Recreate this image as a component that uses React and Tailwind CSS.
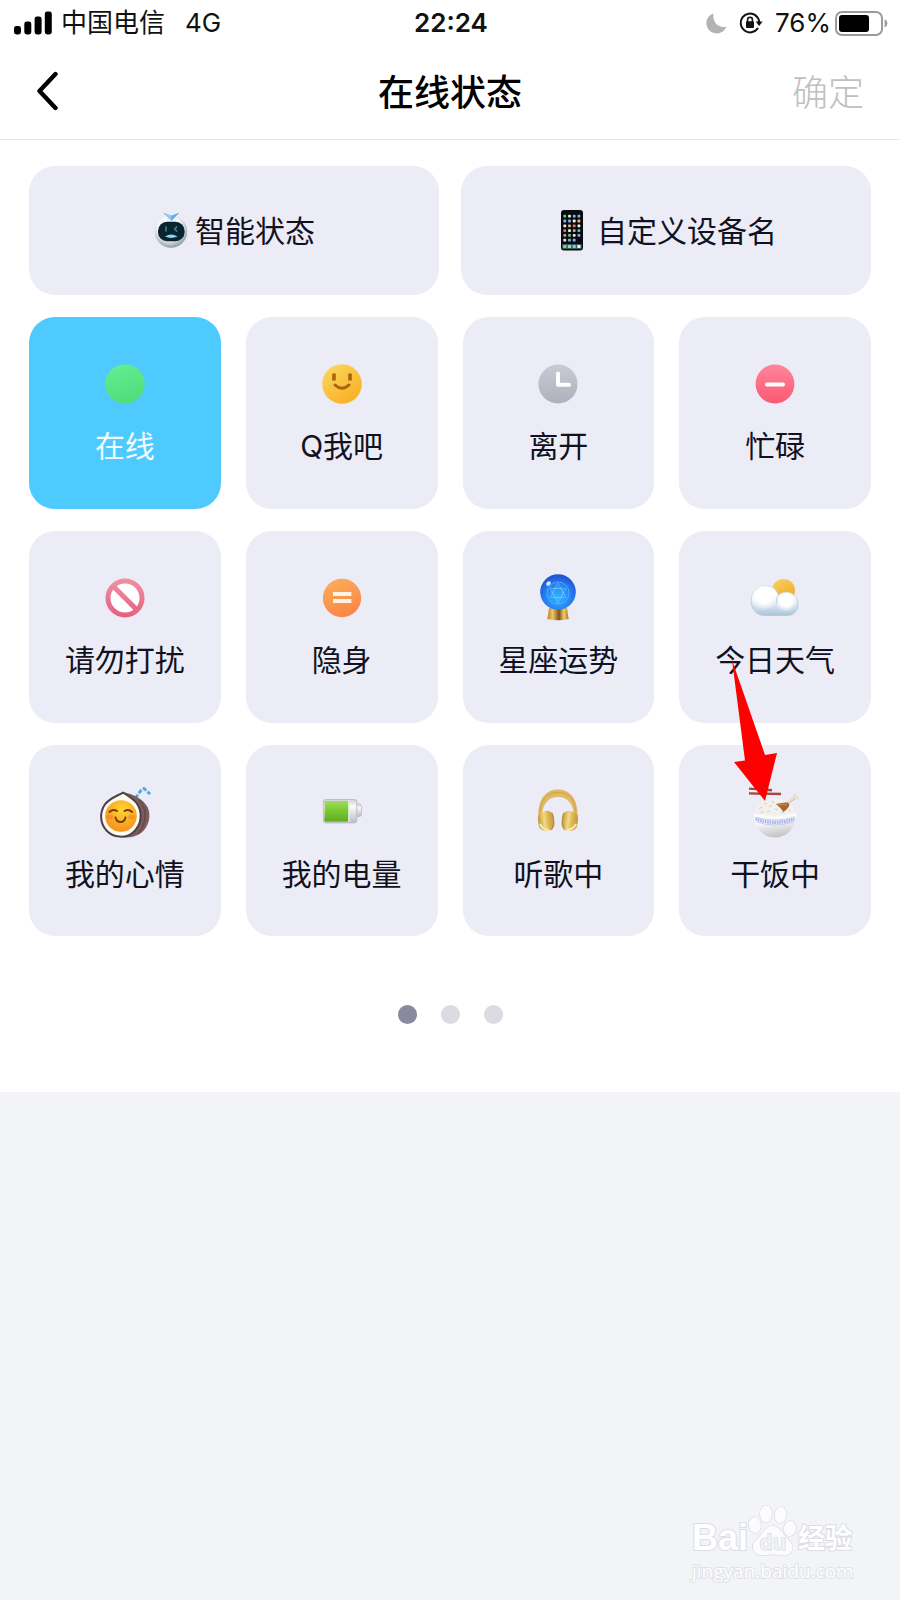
import { useState } from 'react';

const SignalIcon = () => (
  <svg width="38" height="24" viewBox="0 0 38 24" aria-hidden="true">
    <rect x="0" y="15" width="7" height="8.5" rx="2.4" />
    <rect x="10.3" y="10.5" width="7" height="13" rx="2.4" />
    <rect x="20.6" y="5.5" width="7" height="18" rx="2.4" />
    <rect x="30.8" y="0.5" width="7" height="23" rx="2.4" />
  </svg>
);

const MoonIcon = () => (
  <svg width="21" height="21" viewBox="0 0 21 21" aria-hidden="true">
    <path d="M7.6 0.6 C5.8 7.8 11.4 15.6 20.4 13.8 C18.6 18 15 20.4 10.8 20.4 C5 20.4 0.4 16 0.4 10.3 C0.4 5.8 3.2 2 7.6 0.6Z" fill="#b3b3b3" />
  </svg>
);

const LockIcon = () => (
  <svg width="24" height="22" viewBox="0 0 24 22" fill="none" aria-hidden="true">
    <path d="M16.6 3.4 A9.4 9.4 0 1 0 18.6 16.6" stroke="#111" strokeWidth="2" strokeLinecap="round" />
    <path d="M16.4 3.2 A9.4 9.4 0 0 1 20.2 10" stroke="#111" strokeWidth="2" />
    <path d="M16.6 9.4 H23.6 L20.2 14Z" fill="#111" />
    <rect x="7" y="9.3" width="8" height="6.7" rx="1" fill="#111" />
    <path d="M8.6 10 V7.6 A2.4 2.4 0 0 1 13.4 7.6 V10" stroke="#111" strokeWidth="1.6" />
  </svg>
);

const PhoneBatteryIcon = () => (
  <svg width="53" height="25" viewBox="0 0 53 25" aria-hidden="true">
    <rect x="1" y="1" width="46" height="23" rx="6" fill="none" stroke="#9b9b9b" strokeWidth="2" />
    <rect x="4" y="4" width="30" height="17" rx="3" fill="#000" />
    <path d="M49.6 8.6 Q52.4 9.6 52.4 12.5 Q52.4 15.4 49.6 16.4Z" fill="#9b9b9b" />
  </svg>
);

const RobotIcon = () => (
  <svg width="36" height="44" viewBox="0 0 36 44" aria-hidden="true">
    <defs>
      <radialGradient id="robotHead" cx="0.45" cy="0.38" r="0.62">
        <stop offset="0.6" stopColor="#f4f6f7" />
        <stop offset="1" stopColor="#8f9ca3" />
      </radialGradient>
    </defs>
    <circle cx="18" cy="22.6" r="16.2" fill="url(#robotHead)" />
    <path d="M10 3.5 L18 6.8 L26.5 3.5 L18.6 12Z" fill="#5ab0f6" />
    <path d="M10 3.5 L18 6.8 L18.6 12Z" fill="#86c9fb" />
    <rect x="5" y="12.8" width="26.6" height="19.4" rx="9" fill="#0a2530" />
    <path d="M13 17.5 V22.5 M24 17.5 L21.8 20 L24 22.5" stroke="#3f8f91" strokeWidth="1.5" fill="none" />
    <path d="M12 27.5 Q18 23.6 24.5 27.5 Q18 30.4 12 27.5Z" fill="#7fd8fb" />
  </svg>
);

const appColors = ['#5fc795', '#f4f4f4', '#e9b08c', '#8fa9e8', '#e5e5e5', '#d9a08c', '#d97c6c', '#f2efe2', '#7fb3d9'];

const MobileIcon = () => (
  <svg width="36" height="44" viewBox="0 0 36 44" aria-hidden="true">
    <rect x="6" y="1" width="22" height="40.5" rx="3" fill="#090b10" />
    {Array.from({ length: 23 }, (_, i) => (
      <rect
        key={i}
        x={8.4 + (i % 4) * 4.7}
        y={5.8 + Math.floor(i / 4) * 4.8}
        width="2.8"
        height="2.8"
        rx="0.7"
        fill={appColors[(i * 4 + Math.floor(i / 4)) % 9]}
      />
    ))}
    <rect x="7.2" y="35" width="19.6" height="5" rx="1" fill="#3b5a57" />
    {['#76d59a', '#8be0b0', '#78cfd0', '#f1f4f1'].map((color, i) => (
      <rect key={color} x={8.2 + i * 4.7} y="35.9" width="3.2" height="3.2" rx="0.7" fill={color} />
    ))}
  </svg>
);

const OnlineIcon = () => (
  <>
    <defs>
      <linearGradient id="online" x1="0" y1="0" x2="0.3" y2="1">
        <stop stopColor="#66ee90" />
        <stop offset="1" stopColor="#52dd7d" />
      </linearGradient>
    </defs>
    <circle cx="28" cy="28" r="19.8" fill="url(#online)" />
  </>
);

const SmileIcon = () => (
  <>
    <defs>
      <linearGradient id="smile" x1="0.1" y1="0" x2="0.8" y2="1">
        <stop stopColor="#fbd85a" />
        <stop offset="1" stopColor="#f7ae25" />
      </linearGradient>
    </defs>
    <circle cx="28" cy="28" r="19.8" fill="url(#smile)" />
    <path d="M20 17.5 V24.5 M36 17.5 V24.5" stroke="#a9620f" strokeWidth="3.6" />
    <path d="M21 29 Q28 35.5 35 29" stroke="#a9620f" strokeWidth="3" strokeLinecap="round" fill="none" />
  </>
);

const AwayIcon = () => (
  <>
    <defs>
      <linearGradient id="away" x1="0" y1="0" x2="0" y2="1">
        <stop stopColor="#c9cad3" />
        <stop offset="1" stopColor="#b0b0bd" />
      </linearGradient>
    </defs>
    <circle cx="28" cy="28" r="19.6" fill="url(#away)" />
    <path d="M28 17.5 V28.8 H39" stroke="#fff" strokeWidth="4" strokeLinecap="round" strokeLinejoin="round" fill="none" />
  </>
);

const BusyIcon = () => (
  <>
    <defs>
      <linearGradient id="busy" x1="0" y1="0" x2="0" y2="1">
        <stop stopColor="#ff859b" />
        <stop offset="1" stopColor="#fc5872" />
      </linearGradient>
    </defs>
    <circle cx="28" cy="28" r="19.4" fill="url(#busy)" />
    <path d="M20 28.5 H36" stroke="#fff" strokeWidth="4" strokeLinecap="round" />
  </>
);

const BlockIcon = () => (
  <>
    <defs>
      <linearGradient id="block" gradientUnits="userSpaceOnUse" x1="28" y1="8" x2="28" y2="48">
        <stop stopColor="#ee93a5" />
        <stop offset="1" stopColor="#e2607f" />
      </linearGradient>
    </defs>
    <circle cx="28" cy="28" r="17" fill="#fff" stroke="url(#block)" strokeWidth="5" />
    <path d="M16 16 L40 40" stroke="url(#block)" strokeWidth="5" />
  </>
);

const HiddenIcon = () => (
  <>
    <defs>
      <linearGradient id="hidden" x1="0" y1="0" x2="0.4" y2="1">
        <stop stopColor="#fbb05c" />
        <stop offset="1" stopColor="#fa8846" />
      </linearGradient>
    </defs>
    <circle cx="28" cy="28" r="19.2" fill="url(#hidden)" />
    <path d="M19 24 H37.4 M19 31 H37.4" stroke="#fff3e6" strokeWidth="4" />
  </>
);

const CrystalIcon = () => (
  <>
    <defs>
      <radialGradient id="crystal" cx="0.5" cy="0.65" r="0.6">
        <stop stopColor="#33b5fd" />
        <stop offset="0.6" stopColor="#2583f5" />
        <stop offset="1" stopColor="#2355d3" />
      </radialGradient>
      <linearGradient id="stand">
        <stop stopColor="#b5812b" />
        <stop offset="0.25" stopColor="#efc66a" />
        <stop offset="0.55" stopColor="#7d5218" />
        <stop offset="0.78" stopColor="#f4cb70" />
        <stop offset="1" stopColor="#a9772a" />
      </linearGradient>
    </defs>
    <path d="M19 38 H37 L38.6 49 Q28 51.5 17.4 49Z" fill="url(#stand)" />
    <circle cx="28" cy="22" r="17.8" fill="url(#crystal)" />
    <circle cx="28" cy="23" r="11" fill="none" stroke="#63c6ff" strokeWidth="0.8" opacity="0.7" />
    <path d="M28 13 L36 27.5 H20Z M28 33 L20 18.5 H36Z" fill="none" stroke="#7fd3ff" strokeWidth="0.8" opacity="0.6" />
    <circle cx="28" cy="23" r="5" fill="none" stroke="#7fd3ff" strokeWidth="0.8" opacity="0.7" />
    <ellipse cx="18.5" cy="13.5" rx="2.6" ry="1.8" transform="rotate(-40 18.5 13.5)" fill="#d4ebff" />
  </>
);

const WeatherIcon = () => (
  <>
    <defs>
      <linearGradient id="sun" x1="0" y1="0" x2="0.6" y2="1">
        <stop stopColor="#f8d45f" />
        <stop offset="1" stopColor="#f1a92c" />
      </linearGradient>
      <linearGradient id="cloud" gradientUnits="userSpaceOnUse" x1="28" y1="14" x2="28" y2="46">
        <stop offset="0.4" stopColor="#fafbfe" />
        <stop offset="1" stopColor="#a9c3da" />
      </linearGradient>
      <radialGradient id="lobe" cx="0.45" cy="0.4" r="0.6">
        <stop offset="0.4" stopColor="#fff" />
        <stop offset="0.85" stopColor="#fff" stopOpacity="0" />
      </radialGradient>
    </defs>
    <circle cx="36.5" cy="20.5" r="11.5" fill="url(#sun)" />
    <path
      d="M18 45.5 C9 45.5 4.2 38.5 4.2 31 C4.2 22.5 10.5 15.8 18.5 15.8 C25 15.8 29.5 19.5 31.5 25 C34 22.8 37 22 40 22.3 C46.5 23 51 28 51 34.5 C51 41 46.5 45.5 40 45.5Z"
      fill="url(#cloud)"
      stroke="#b4c5d8"
      strokeWidth="0.8"
    />
    <circle cx="18.5" cy="29" r="14" fill="url(#lobe)" />
    <circle cx="40" cy="33" r="11" fill="url(#lobe)" />
    <path d="M31.5 25 C29.5 28 29 31 30 34" stroke="#c9d6e6" strokeWidth="1.2" fill="none" />
  </>
);

const MoodIcon = () => (
  <>
    <defs>
      <radialGradient id="mood" cx="0.55" cy="0.3" r="0.75">
        <stop stopColor="#ffd735" />
        <stop offset="1" stopColor="#f58a1c" />
      </radialGradient>
    </defs>
    <path d="M38.5 14 L44.5 5.5 L47 4.5 L53 10" stroke="#cdeaff" strokeWidth="2.8" fill="none" strokeLinejoin="round" />
    <path d="M38.5 14 L44.5 5.5 L47 4.5 L53 10" stroke="#55a3da" strokeWidth="2.8" fill="none" strokeDasharray="4 2" strokeLinejoin="round" />
    <path d="M26 8 C36 10 46 15 50.5 23 C54.5 31 52 43 44 49 C38 53.5 30 54 24 53Z" fill="#7b5b5b" />
    <path d="M42 16 C50 24 51 37 41 50" stroke="#694a4b" strokeWidth="1.6" fill="none" />
    <path
      d="M26 8.6 C19 12.5 12 14.5 7.5 21 C2.5 29 3 39.5 9.5 46.5 C16 53.5 28.5 55 36 48.5 C45 40.5 46 28 39.5 19 C36 14.5 30.5 11.5 26 8.6Z"
      fill="#fffaf2"
      stroke="#4a4247"
      strokeWidth="2"
    />
    <circle cx="24" cy="32" r="15.8" fill="url(#mood)" />
    <ellipse cx="13" cy="33" rx="3.5" ry="2.3" fill="#f36b2b" opacity="0.4" />
    <ellipse cx="34.5" cy="33" rx="3.5" ry="2.3" fill="#f36b2b" opacity="0.4" />
    <path d="M12.5 28 Q16 24.5 20 27 M27.5 27 Q31.5 24.5 35 28 M18.5 33.5 Q19.5 38 23.5 38 Q27.5 38 28.5 33.5" stroke="#7c3d07" strokeWidth="2" strokeLinecap="round" fill="none" />
  </>
);

const ChargeIcon = () => (
  <>
    <defs>
      <linearGradient id="shell" x1="0" y1="0" x2="0" y2="1">
        <stop stopColor="#cfcfd6" />
        <stop offset="0.3" stopColor="#fbfbfd" />
        <stop offset="1" stopColor="#b9bbc4" />
      </linearGradient>
      <linearGradient id="charge" x1="0" y1="0" x2="0" y2="1">
        <stop stopColor="#9ddc55" />
        <stop offset="0.5" stopColor="#78c832" />
        <stop offset="1" stopColor="#61aa22" />
      </linearGradient>
    </defs>
    <rect x="41.5" y="20" width="6" height="12.5" rx="2.5" fill="url(#shell)" stroke="#b6b8c1" strokeWidth="0.8" />
    <rect x="9.4" y="15.5" width="33.4" height="23.4" rx="2.5" fill="url(#shell)" stroke="#bcbec6" />
    <rect x="10.6" y="17" width="24" height="20.6" rx="1" fill="url(#charge)" />
    <path d="M35 16.5 V38" stroke="#e8f4df" strokeWidth="1.4" />
  </>
);

const HeadphoneIcon = () => (
  <>
    <defs>
      <linearGradient id="gold">
        <stop stopColor="#c39737" />
        <stop offset="0.4" stopColor="#f2da85" />
        <stop offset="0.65" stopColor="#dfb54e" />
        <stop offset="1" stopColor="#c29847" />
      </linearGradient>
    </defs>
    <path d="M8.3 33 C8 16 15 5.6 28 5.6 C41 5.6 48 16 47.7 33 L44.5 33 C43.5 20 38 13 28 13 C18 13 12.5 20 11.5 33Z" fill="#dfba62" />
    <path d="M10 28 C11 15 17 8.6 28 8.6 C39 8.6 45 15 46 28" stroke="#cda24a" strokeWidth="1" fill="none" />
    <rect x="8.2" y="27" width="16" height="20" rx="7" transform="rotate(-7 16 37)" fill="url(#gold)" />
    <rect x="31.8" y="27" width="16" height="20" rx="7" transform="rotate(7 40 37)" fill="url(#gold)" />
    <path d="M10 40 Q13 46 19 46 M46 40 Q43 46 37 46" stroke="#f7e6b7" strokeWidth="2.4" fill="none" />
    <path d="M22 28.5 Q25.5 37 21.5 46 M34 28.5 Q30.5 37 34.5 46" stroke="#b58a3e" strokeWidth="1" fill="none" />
  </>
);

const RiceIcon = () => (
  <>
    <defs>
      <linearGradient id="bowl" x1="0" y1="0" x2="0.25" y2="1">
        <stop offset="0.4" stopColor="#fafafc" />
        <stop offset="1" stopColor="#c6c6ca" />
      </linearGradient>
    </defs>
    <path d="M2 4.6 L25 6.2 M2 9.4 L34 10" stroke="#a8483d" strokeWidth="2.4" />
    <path d="M8 31 C8 22 14 15 26 14.8 C40 14.6 47 21 48 31Z" fill="#f3f1ed" />
    <path d="M12 25 l3 -2 M17 19 l3 1 M22 23 l3 -2 M25 17 l2 2 M20 28 l3 -1 M14 29 l2 -2 M28 25 l3 1 M42 26 l2 1 M34 29 l3 -1" stroke="#d6d3cc" strokeWidth="1.2" />
    <path d="M41 18 L48 13" stroke="#eadfd3" strokeWidth="2.8" />
    <path d="M41.5 19.3 L48 14.8" stroke="#bba894" strokeWidth="0.7" />
    <circle cx="47.6" cy="11.4" r="1.8" fill="#eadfd3" />
    <circle cx="50" cy="14" r="1.8" fill="#eadfd3" />
    <path d="M29 20 Q36 18 41 18.5 Q44 21 40 25 L36.5 28 Q34 24 29 20Z" fill="#a8652f" />
    <path d="M31 21 Q36 19.5 40 21" stroke="#d09151" strokeWidth="1" fill="none" />
    <path d="M6.5 29 Q28 34.5 49.5 29 C49 44 40 53.6 28 53.6 C16 53.6 7 44 6.5 29Z" fill="url(#bowl)" />
    <path d="M8.5 35 Q28 41.5 47.5 35" stroke="#a3b5e8" strokeWidth="3.4" strokeDasharray="1.6 0.8" fill="none" />
    <path d="M7.8 33 Q28 39 48 33 M9.5 38 Q28 44 46.5 38" stroke="#b9c8ee" strokeWidth="0.8" fill="none" />
  </>
);

const statuses = [
  { label: '在线', Icon: OnlineIcon },
  { label: 'Q我吧', Icon: SmileIcon },
  { label: '离开', Icon: AwayIcon },
  { label: '忙碌', Icon: BusyIcon },
  { label: '请勿打扰', Icon: BlockIcon },
  { label: '隐身', Icon: HiddenIcon },
  { label: '星座运势', Icon: CrystalIcon },
  { label: '今日天气', Icon: WeatherIcon },
  { label: '我的心情', Icon: MoodIcon },
  { label: '我的电量', Icon: ChargeIcon },
  { label: '听歌中', Icon: HeadphoneIcon },
  { label: '干饭中', Icon: RiceIcon, pointed: true },
];

const PointerArrow = () => (
  <svg className="pointer-events-none absolute -top-[89px] left-[51px] z-10" width="50" height="148" viewBox="0 0 50 148" aria-hidden="true">
    <path d="M2 4 L35 99 L47 97 L35 145 L4 106 L15 104.5Z" fill="#ff0000" />
  </svg>
);

const StatusBar = () => (
  <div className="grid h-[46px] grid-cols-3 items-center pr-3 pl-[14px] text-[26px] leading-8 text-[#111]">
    <div className="flex items-center">
      <SignalIcon />
      <span className="ml-[9px]">中国电信</span>
      <span className="ml-5">4G</span>
    </div>
    <div className="text-center font-semibold">22:24</div>
    <div className="flex items-center justify-end">
      <MoonIcon />
      <span className="ml-3"><LockIcon /></span>
      <span className="ml-3">76%</span>
      <span className="ml-1"><PhoneBatteryIcon /></span>
    </div>
  </div>
);

const Watermark = () => (
  <footer className="mt-auto flex justify-end pr-12 pb-4 font-['Open_Sans','Noto_Sans_CJK_SC',sans-serif] text-white">
    <div className="w-[160px]">
      <div className="flex h-[54px] items-end font-bold [-webkit-text-stroke:2px_#dcdde2] [paint-order:stroke_fill]">
        <span className="font-['Liberation_Sans',sans-serif] text-[36px] leading-10">Bai</span>
        <svg width="50" height="54" viewBox="0 0 50 54" aria-hidden="true">
          <g fill="#fcfcfe" stroke="#d6d7dc" strokeWidth="1.2">
            <ellipse cx="18" cy="10" rx="6" ry="8.5" />
            <ellipse cx="32.5" cy="11" rx="6" ry="8" transform="rotate(8 32.5 11)" />
            <ellipse cx="6.8" cy="21" rx="6" ry="8" transform="rotate(-8 6.8 21)" />
            <ellipse cx="42" cy="24.5" rx="6" ry="7.5" transform="rotate(10 42 24.5)" />
            <path d="M25 22 C32 22 33.5 29 39 34 C45 40 46 44 43 48.5 C39 53 31 50.5 25 50.5 C18 50.5 11 53 7 48.5 C3 44 4.5 39 10 34 C15.5 29 17 22 25 22Z" />
          </g>
          <text x="25" y="46" textAnchor="middle" fontSize="21" fill="#f0f1f5" stroke="#cfd0d6" strokeWidth="1">du</text>
        </svg>
        <span className="text-[27px] leading-10">经验</span>
      </div>
      <div className="text-[19px] leading-[26px] [-webkit-text-stroke:2px_#e0e1e6] [paint-order:stroke_fill]">jingyan.baidu.com</div>
    </div>
  </footer>
);

const App = () => {
  const [current, setCurrent] = useState('在线');
  const [page, setPage] = useState(0);

  return (
    <div className="flex min-h-screen flex-col bg-[#f2f4f8] font-[Inter,'Noto_Sans_CJK_SC',sans-serif]">
      <div className="bg-white">
        <StatusBar />

        <header className="grid h-[94px] grid-cols-3 items-center border-b border-[#e6e6e8] px-9 text-[36px] leading-[48px]">
          <button type="button" aria-label="返回" className="justify-self-start">
            <svg width="22" height="44" viewBox="0 0 22 44" fill="none" aria-hidden="true">
              <path d="M19.5 3 L3.5 20 L19.5 37" stroke="#000" strokeWidth="4.4" strokeLinecap="round" strokeLinejoin="round" />
            </svg>
          </button>
          <h1 className="text-center font-medium text-black">在线状态</h1>
          <button type="button" className="justify-self-end font-light text-[#c0c0c0]">确定</button>
        </header>

        <main className="px-[29px] pt-[26px] pb-[68px] text-[30px] leading-10 text-[#11111f]">
          <div className="grid grid-cols-2 gap-[22px]">
            <button type="button" className="flex h-[129px] items-center justify-center gap-[6px] rounded-[26px] bg-[#ebecf6]">
              <RobotIcon />
              智能状态
            </button>
            <button type="button" className="flex h-[129px] items-center justify-center gap-[6px] rounded-[26px] bg-[#ebecf6]">
              <MobileIcon />
              自定义设备名
            </button>
          </div>

          <div className="mt-[22px] grid grid-cols-4 gap-x-[25px] gap-y-[22px]">
            {statuses.map(({ label, Icon, pointed }) => (
              <div key={label} className="relative">
                <button
                  type="button"
                  onClick={() => setCurrent(label)}
                  className={`flex aspect-square w-full flex-col items-center justify-center gap-[14px] rounded-[26px] pb-[3px] ${
                    current === label ? 'bg-[#4ecaff] text-[#f0fbff]' : 'bg-[#ebecf6]'
                  }`}
                >
                  <svg width="56" height="56" viewBox="0 0 56 56" aria-hidden="true">
                    <Icon />
                  </svg>
                  {label}
                </button>
                {pointed && <PointerArrow />}
              </div>
            ))}
          </div>

          <div className="mt-[69px] flex justify-center gap-6">
            {[0, 1, 2].map((i) => (
              <button
                key={i}
                type="button"
                aria-label={`第${i + 1}页`}
                onClick={() => setPage(i)}
                className={`size-[19px] rounded-full ${page === i ? 'bg-[#8b899d]' : 'bg-[#dbdbe2]'}`}
              />
            ))}
          </div>
        </main>
      </div>

      <Watermark />
    </div>
  );
};

export default App;
